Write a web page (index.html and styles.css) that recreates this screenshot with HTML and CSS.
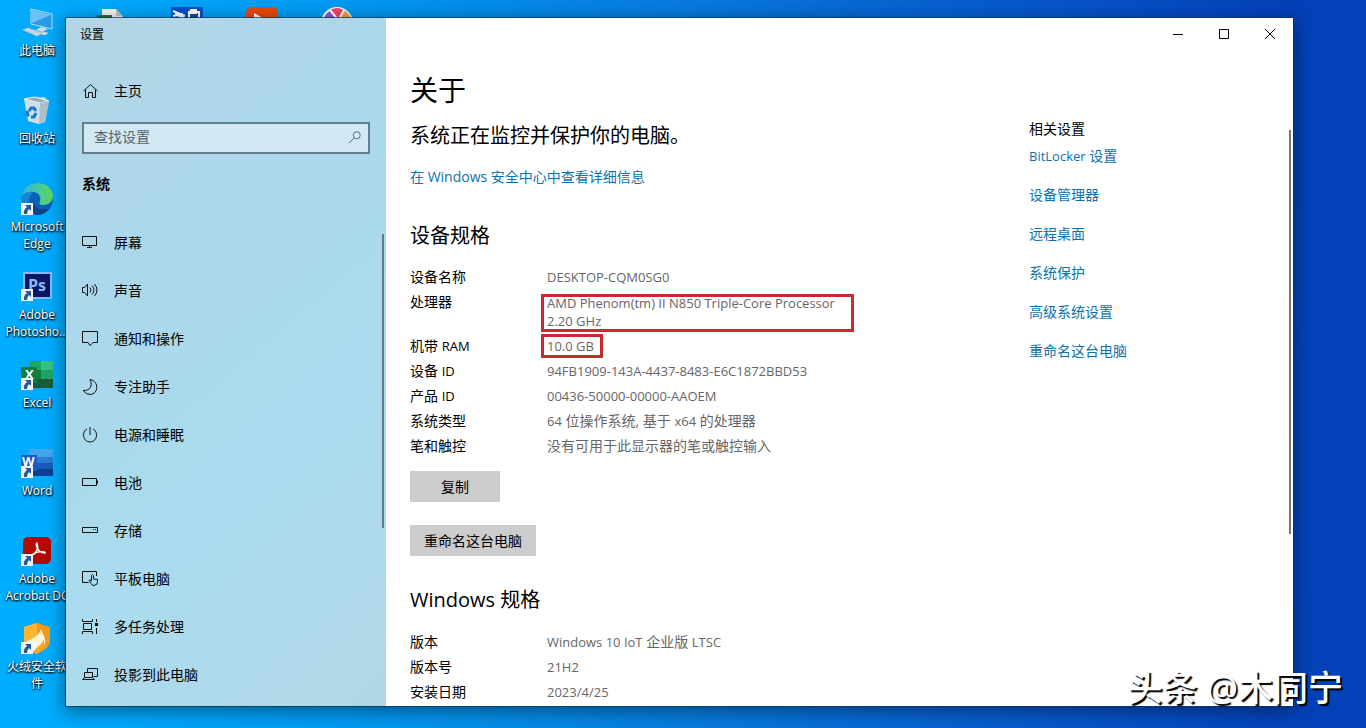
FILE: index.html
```html
<!DOCTYPE html>
<html lang="zh-CN">
<head>
  <meta charset="UTF-8">
  <title>设置</title>
  <link rel="stylesheet" href="styles.css">
</head>
<body>
  <!-- Shared shortcut arrow -->
  <svg class="defs" width="0" height="0" aria-hidden="true">
    <symbol id="shortcut" viewBox="0 0 12 12">
      <rect width="12" height="12" fill="#f4f7fa"/>
      <path d="M4 2h6v6L8 6Q6 8 6 11H3Q2 7 6 4z" fill="#2c5596"/>
    </symbol>
  </svg>

  <!-- Desktop icons -->
  <div class="desktop">
    <a class="shortcut" href="#">
      <svg width="32" height="32" viewBox="0 0 32 32">
        <path d="M10 2l21 5v15l-21-5z" fill="#2b9be8" stroke="#b8dcf2"/>
        <path d="M11 3l19 5-19 8z" fill="#6cc0f5"/>
        <path d="M20 20l7 2-6 3-6-2z" fill="#c8dce8"/>
        <path d="M7 21l15 5-6 3-14-6z" fill="#e2edf4" stroke="#a0bccd"/>
        <path d="M5 23l13 5M8 22l12 5M22 25l5 1-3 2-4-1z" stroke="#a9c1cf" fill="#e2edf4"/>
      </svg>
      <span>此电脑</span>
    </a>
    <a class="shortcut" href="#">
      <svg width="32" height="32" viewBox="0 0 32 32">
        <path d="M3 4l20-2 5 4-4 21-6 2-11-3z" fill="#cfdfe8"/>
        <path d="M3 4l11-2 14 4-9 2z" fill="#95adba" stroke="#eef5f8"/>
        <path d="M19 8l9-2-4 21-6 2z" fill="#aebfca"/>
        <path d="M8 16l2-3h3l2 3M15 18l-2 4h-3M8 21l-2-2 1-3" fill="none" stroke="#1878cc" stroke-width="3"/>
      </svg>
      <span>回收站</span>
    </a>
    <a class="shortcut" href="#">
      <svg width="32" height="32" viewBox="0 0 32 32">
        <defs>
          <linearGradient id="edgeTop"><stop offset="0" stop-color="#27b5e8"/><stop offset="1" stop-color="#60d95a"/></linearGradient>
        </defs>
        <circle cx="16" cy="16" r="16" fill="#0d5fb4"/>
        <path d="M0 15C1 5 8 0 16 0c9 0 16 6 16 13 0 6-5 9-10 9-4 0-4-2-3-4 2-6-4-10-10-9-5 1-8 3-9 6z" fill="url(#edgeTop)"/>
        <path d="M12 10C5 15 7 27 15 31 5 33-2 24 0 14c3-5 8-6 12-4z" fill="#1485d8"/>
        <path d="M12 19c0 6 8 9 16 6-3 5-7 7-12 7-7-3-8-10-4-13z" fill="#0c438e"/>
        <use href="#shortcut" y="20" width="12" height="12"/>
      </svg>
      <span>Microsoft<br>Edge</span>
    </a>
    <a class="shortcut" href="#">
      <svg width="32" height="32" viewBox="0 0 32 32">
        <rect x="3" y="2" width="27" height="25" fill="#0a1767" stroke="#8bb7f2" stroke-width="2"/>
        <text x="7" y="20" class="logo-ps">Ps</text>
        <use href="#shortcut" y="18" width="12" height="12"/>
      </svg>
      <span>Adobe<br>Photosho...</span>
    </a>
    <a class="shortcut" href="#">
      <svg width="32" height="32" viewBox="0 0 32 32">
        <path d="M9 2h11v9H9z" fill="#21a366"/><path d="M20 2h12v9H20z" fill="#33c481"/>
        <path d="M9 11h11v9H9z" fill="#107c41"/><path d="M20 11h12v9H20z" fill="#21a366"/>
        <path d="M9 20h23v9H9z" fill="#185c37"/>
        <rect y="8" width="16" height="16" fill="#107c41"/>
        <text x="4" y="20" class="logo-office">X</text>
        <use href="#shortcut" y="19" width="12" height="12"/>
      </svg>
      <span>Excel</span>
    </a>
    <a class="shortcut" href="#">
      <svg width="32" height="32" viewBox="0 0 32 32">
        <path d="M8 2h24v9H8z" fill="#41a5ee"/><path d="M8 10h24v7H8z" fill="#2b7cd3"/>
        <path d="M8 16h24v7H8z" fill="#185abd"/><path d="M8 22h24v7H8z" fill="#103f91"/>
        <rect y="8" width="16" height="16" fill="#185abd"/>
        <text x="1" y="19" class="logo-office">W</text>
        <use href="#shortcut" y="19" width="12" height="12"/>
      </svg>
      <span>Word</span>
    </a>
    <a class="shortcut" href="#">
      <svg width="32" height="32" viewBox="0 0 32 32">
        <rect x="2" y="2" width="28" height="27" rx="5" fill="#b30b00"/>
        <path d="M11 20c4-1 7-7 5-12-2 0 0 10 8 10 1-2-9-2-13 2z" fill="none" stroke="#fff" stroke-width="1.500"/>
        <use href="#shortcut" y="19" width="12" height="12"/>
      </svg>
      <span>Adobe<br>Acrobat DC</span>
    </a>
    <a class="shortcut" href="#">
      <svg width="32" height="32" viewBox="0 0 32 32">
        <path d="M3 4l13-4 13 4v14c0 6-7 10-13 13C10 28 3 24 3 18z" fill="#f59a17"/>
        <path d="M3 4l13-4v31C10 28 3 24 3 18z" fill="#ffb62e"/>
        <path d="M20 6c2 6 5 9 4 14s-6 8-9 9C9 26 4 22 6 18c5-2 11-4 14-12z" fill="#fff5df"/>
        <path d="M22 16c0 6-6 7-9 12l3 2c6-2 9-8 6-14z" fill="#f7a62c"/>
        <use href="#shortcut" y="19" width="12" height="12"/>
      </svg>
      <span>火绒安全软<br>件</span>
    </a>
    <a class="shortcut" href="#" aria-label="文档">
      <svg width="32" height="32" viewBox="0 0 32 32">
        <path d="M6 2h14l7 8v20H6z" fill="#f3f5f4"/><path d="M20 2v7h7z" fill="#b9c4be"/><path d="M1 8h15v18H1z" fill="#217346"/>
      </svg>
    </a>
    <a class="shortcut" href="#" aria-label="工具">
      <svg width="32" height="32" viewBox="0 0 32 32">
        <path d="M0 0h32v32H0z" fill="#0750c8"/>
        <path d="M2 4l12 5M2 9l10-2M4 7l9 4" stroke="#fff" stroke-width="2"/>
        <path d="M18 5h10v9H18zM20 3h5v3h-5z" stroke="#fff" stroke-width="2" fill="#174d9c"/>
      </svg>
    </a>
    <a class="shortcut" href="#" aria-label="视频">
      <svg width="32" height="32" viewBox="0 0 32 32">
        <rect width="32" height="32" rx="6" fill="#e8480c"/><path d="M8 6l14 8-14 8z" fill="#fff"/>
      </svg>
    </a>
    <a class="shortcut" href="#" aria-label="图片">
      <svg width="32" height="32" viewBox="0 0 32 32">
        <circle cx="16" cy="16" r="15" fill="#8d5bd6" stroke="#fff" stroke-width="2"/>
        <path d="M16 16L9 3q7-4 14 0z" fill="#ef4665"/><path d="M16 16l7-13q7 4 8 12z" fill="#f29a4b"/>
        <path d="M18 14L9 3M16 16l7-13" stroke="#fff" stroke-width="2"/>
      </svg>
    </a>
  </div>

  <!-- Settings window -->
  <div class="window">
    <aside class="sidebar">
      <div class="window-title">设置</div>
      <a class="nav-link home" href="#">
        <svg class="icon" viewBox="0 0 16 16"><path d="M1.500 8L8.500 1.500l7 6.500M3.500 6.500v8h3v-5h4v5h3v-8"/></svg>
        主页
      </a>
      <div class="search">
        <input type="text" id="search" placeholder="查找设置" aria-label="查找设置">
        <svg class="icon" viewBox="0 0 16 16"><circle cx="10" cy="6" r="4"/><path d="M7 9l-6 6"/></svg>
      </div>
      <h2 class="section">系统</h2>
      <nav>
        <a class="nav-link" href="#">
          <svg class="icon" viewBox="0 0 16 16"><path d="M.5 1.500h14v9H.5zM7.500 10v2M5 12.500h5"/></svg>
          屏幕
        </a>
        <a class="nav-link" href="#">
          <svg class="icon" viewBox="0 0 16 16"><path d="M.5 4.500h2L5.500 1v12L2.500 9.500h-2zM8 4.500q2 2.500 0 5M10 2.500q4 4.500 0 9M12.500 1q5 6 0 12"/></svg>
          声音
        </a>
        <a class="nav-link" href="#">
          <svg class="icon" viewBox="0 0 16 16"><path d="M.5.5h15v11H11L8 14.500 6 11.500H.5z"/></svg>
          通知和操作
        </a>
        <a class="nav-link" href="#">
          <svg class="icon" viewBox="0 0 16 16"><path d="M8 .5C17 2 17 15 8 15.500q-4 0-7-4C8 12 11 7 8 .5z"/></svg>
          专注助手
        </a>
        <a class="nav-link" href="#">
          <svg class="icon" viewBox="0 0 16 16"><path d="M8 0v8M5 2C-1 5 1 15 8 15s9-10 3-13"/></svg>
          电源和睡眠
        </a>
        <a class="nav-link" href="#">
          <svg class="icon" viewBox="0 0 16 16"><path d="M.5 3.500h14v7H.5zM15.500 5.500v3"/></svg>
          电池
        </a>
        <a class="nav-link" href="#">
          <svg class="icon" viewBox="0 0 16 16"><path d="M.5 4.500h15v5H.5zM11 6.500h1M13 6.500h1"/></svg>
          存储
        </a>
        <a class="nav-link" href="#">
          <svg class="icon" viewBox="0 0 16 16"><path d="M6.500 11.500h-6V.5h14V5M9.500 10V4.500q1-2 2 0V8l4 .5v2q0 4-3.500 4-2 0-3-2L7 9.500q.5-1.500 2.500.5"/></svg>
          平板电脑
        </a>
        <a class="nav-link" href="#">
          <svg class="icon" viewBox="0 0 16 16"><path d="M.5 0v2.500h10V0M1.500 4.500h8v6h-8zM.5 15v-2.500h10V15M14.500 0v3M14.500 9v6"/><path d="M13 4h3v3h-3z" class="solid"/></svg>
          多任务处理
        </a>
        <a class="nav-link" href="#">
          <svg class="icon" viewBox="0 0 16 16"><path d="M5.500 5.500v-4h10v8h-4M2.500 5.500h8v5h-8zM2.500 10.500l-2 2h12l-2-2"/></svg>
          投影到此电脑
        </a>
      </nav>
      <span class="scrollbar side-scroll"></span>
    </aside>

    <div class="content">
      <div class="controls">
        <button type="button" aria-label="最小化"><svg width="10" height="10" viewBox="0 0 10 10"><path d="M0 5.500h10"/></svg></button>
        <button type="button" aria-label="最大化"><svg width="10" height="10" viewBox="0 0 10 10"><path d="M.5.5h9v9h-9z"/></svg></button>
        <button type="button" aria-label="关闭"><svg width="10" height="10" viewBox="0 0 10 10"><path d="M0 0l10 10M10 0L0 10"/></svg></button>
      </div>

      <div class="columns">
        <main>
          <h1>关于</h1>
          <p class="status">系统正在监控并保护你的电脑。</p>
          <a class="link" href="#">在 Windows 安全中心中查看详细信息</a>

          <h2>设备规格</h2>
          <table>
            <tr><th>设备名称</th><td><span class="en">DESKTOP-CQM0SG0</span></td></tr>
            <tr><th>处理器</th><td><div class="en marked cpu">AMD Phenom(tm) II N850 Triple-Core Processor 2.20 GHz</div></td></tr>
            <tr><th>机带 <span class="en">RAM</span></th><td><span class="en marked ram">10.0 GB</span></td></tr>
            <tr><th>设备 <span class="en">ID</span></th><td><span class="en">94FB1909-143A-4437-8483-E6C1872BBD53</span></td></tr>
            <tr><th>产品 <span class="en">ID</span></th><td><span class="en">00436-50000-00000-AAOEM</span></td></tr>
            <tr><th>系统类型</th><td><span class="en">64</span> 位操作系统, 基于 <span class="en">x64</span> 的处理器</td></tr>
            <tr><th>笔和触控</th><td>没有可用于此显示器的笔或触控输入</td></tr>
          </table>
          <div class="actions">
            <button type="button" class="btn">复制</button>
            <button type="button" class="btn">重命名这台电脑</button>
          </div>

          <h2 class="windows-spec">Windows 规格</h2>
          <table>
            <tr><th>版本</th><td><span class="en">Windows 10 IoT</span> 企业版 <span class="en">LTSC</span></td></tr>
            <tr><th>版本号</th><td><span class="en">21H2</span></td></tr>
            <tr><th>安装日期</th><td><span class="en">2023/4/25</span></td></tr>
          </table>
        </main>

        <aside class="related">
          <h3>相关设置</h3>
          <a class="link" href="#"><span class="en">BitLocker</span> 设置</a>
          <a class="link" href="#">设备管理器</a>
          <a class="link" href="#">远程桌面</a>
          <a class="link" href="#">系统保护</a>
          <a class="link" href="#">高级系统设置</a>
          <a class="link" href="#">重命名这台电脑</a>
        </aside>
      </div>
      <span class="scrollbar main-scroll"></span>
    </div>
  </div>

  <div class="watermark">头条 @木同宁</div>
</body>
</html>
```
FILE: styles.css
```css
* {
  box-sizing: border-box;
}
body {
  margin: 0;
  height: 100vh;
  overflow: hidden;
  font-family: "Open Sans", "Noto Sans CJK SC", sans-serif;
  font-size: 14px;
  line-height: 20px;
  color: #000;
  background: linear-gradient(88deg, #00aeff 0%, #009af2 25%, #087bdd 50%, #0758cb 75%, #0440b8 95%);
}
a {
  color: inherit;
  text-decoration: none;
}
h1, h2, h3, p {
  margin: 0;
  font-weight: 400;
}
button {
  font: inherit;
  border: none;
  padding: 0;
}
.defs {
  position: absolute;
}
.en {
  font-size: 13px;
}

/* desktop */
.desktop {
  display: grid;
  grid-template-rows: repeat(8, 88px);
  grid-template-columns: 74px;
  grid-auto-columns: 75px;
  grid-auto-flow: column;
}
.shortcut {
  display: flex;
  flex-direction: column;
  align-items: center;
  gap: 3px;
  padding-top: 7px;
  font-size: 12px;
  line-height: 17px;
  text-align: center;
  white-space: nowrap;
  color: #fff;
  text-shadow: 1px 1px 2px #000, 0 1px 2px #000;
}
.shortcut:nth-child(n+9) {
  grid-row: 1;
}
.logo-ps {
  font: 700 16px "Open Sans", sans-serif;
  fill: #8bb7f2;
  text-shadow: none;
}
.logo-office {
  font: 700 13px "Open Sans", sans-serif;
  fill: #fff;
  text-shadow: none;
}

/* window */
.window {
  position: absolute;
  inset: 18px 73px 22px 66px;
  display: grid;
  grid-template-columns: 320px 1fr;
  overflow: hidden;
  background: #fff;
  box-shadow: 0 0 0 1px rgba(10, 50, 80, 0.7), 0 4px 16px 2px rgba(0, 0, 0, 0.4);
}
.sidebar {
  position: relative;
  padding: 7px 16px;
  background: linear-gradient(140deg, #b3d6e6 0%, #acd7ea 30%, #aadbee 65%, #b1d7e7 100%);
}
.window-title {
  font-size: 12px;
  margin-left: -2px;
}
.nav-link {
  display: flex;
  align-items: center;
  gap: 16px;
  height: 48px;
}
.icon {
  width: 16px;
  height: 16px;
  fill: none;
  stroke: #111;
  stroke-width: 1;
}
.icon .solid {
  fill: #111;
  stroke: none;
}
.home {
  margin-top: 22px;
}
.search {
  display: flex;
  align-items: center;
  height: 32px;
  margin-top: 7px;
  padding: 0 6px 2px 10px;
  border: 2px solid #617f8d;
  background: #d2e8f3;
}
.search input {
  flex: 1;
  min-width: 0;
  border: none;
  padding: 0;
  outline: none;
  font: inherit;
  background: transparent;
}
.search input::placeholder {
  color: #55656d;
}
.search .icon {
  width: 14px;
  height: 14px;
  stroke: #4b5d66;
}
.section {
  margin: 20px 0 25px;
  font-size: 14px;
  font-weight: 700;
}
.scrollbar {
  position: absolute;
  width: 2px;
  background: #777;
}
.side-scroll {
  top: 216px;
  right: 2px;
  height: 294px;
  background: #627d8a;
}
.main-scroll {
  top: 112px;
  right: 2px;
  height: 404px;
}

/* content */
.content {
  position: relative;
  min-width: 0;
}
.controls {
  display: flex;
  justify-content: flex-end;
}
.controls button {
  width: 46px;
  height: 32px;
  background: none;
}
.controls path {
  fill: none;
  stroke: #000;
}
.columns {
  display: grid;
  grid-template-columns: 1fr 264px;
  padding-left: 24px;
}
h1 {
  margin-top: 22px;
  font-size: 28px;
  line-height: 36px;
}
.status {
  margin: 14px 0 17px;
  font-size: 20px;
  line-height: 28px;
}
.link {
  display: block;
  color: #0b72ae;
}
main h2 {
  margin: 35px 0 17px;
  font-size: 20px;
  line-height: 28px;
}
table {
  border-collapse: collapse;
}
th, td {
  padding: 0 0 6px;
  line-height: 19px;
  vertical-align: top;
  text-align: left;
  font-weight: 400;
}
th {
  width: 137px;
}
td {
  color: #666;
}
/* keeps mixed-script lines at one height */
table .en {
  line-height: 18px;
}
.marked {
  position: relative;
}
.marked::after {
  content: "";
  position: absolute;
  border: 3px solid #c9292f;
}
.cpu {
  width: 301px;
  padding-top: 2px;
}
.cpu::after {
  inset: 2px -6px -2px;
}
.ram::after {
  inset: -3px -9px -3px -6px;
}
.actions {
  display: flex;
  flex-direction: column;
  align-items: flex-start;
  gap: 23px;
  margin-top: 10px;
}
.btn {
  min-width: 90px;
  height: 31px;
  padding: 0 14px;
  background: #ccc;
}
main .windows-spec {
  margin-top: 30px;
  margin-bottom: 18px;
}
.related {
  display: flex;
  flex-direction: column;
  align-items: flex-start;
  gap: 19px;
  padding-top: 69px;
}
.related h3 {
  margin-bottom: -12px;
  font-size: 14px;
}

.watermark {
  position: absolute;
  right: 23px;
  bottom: 18px;
  font-size: 35px;
  font-weight: 500;
  line-height: 44px;
  color: #fff;
  text-shadow: 2px 2px 1px #000;
}
```
